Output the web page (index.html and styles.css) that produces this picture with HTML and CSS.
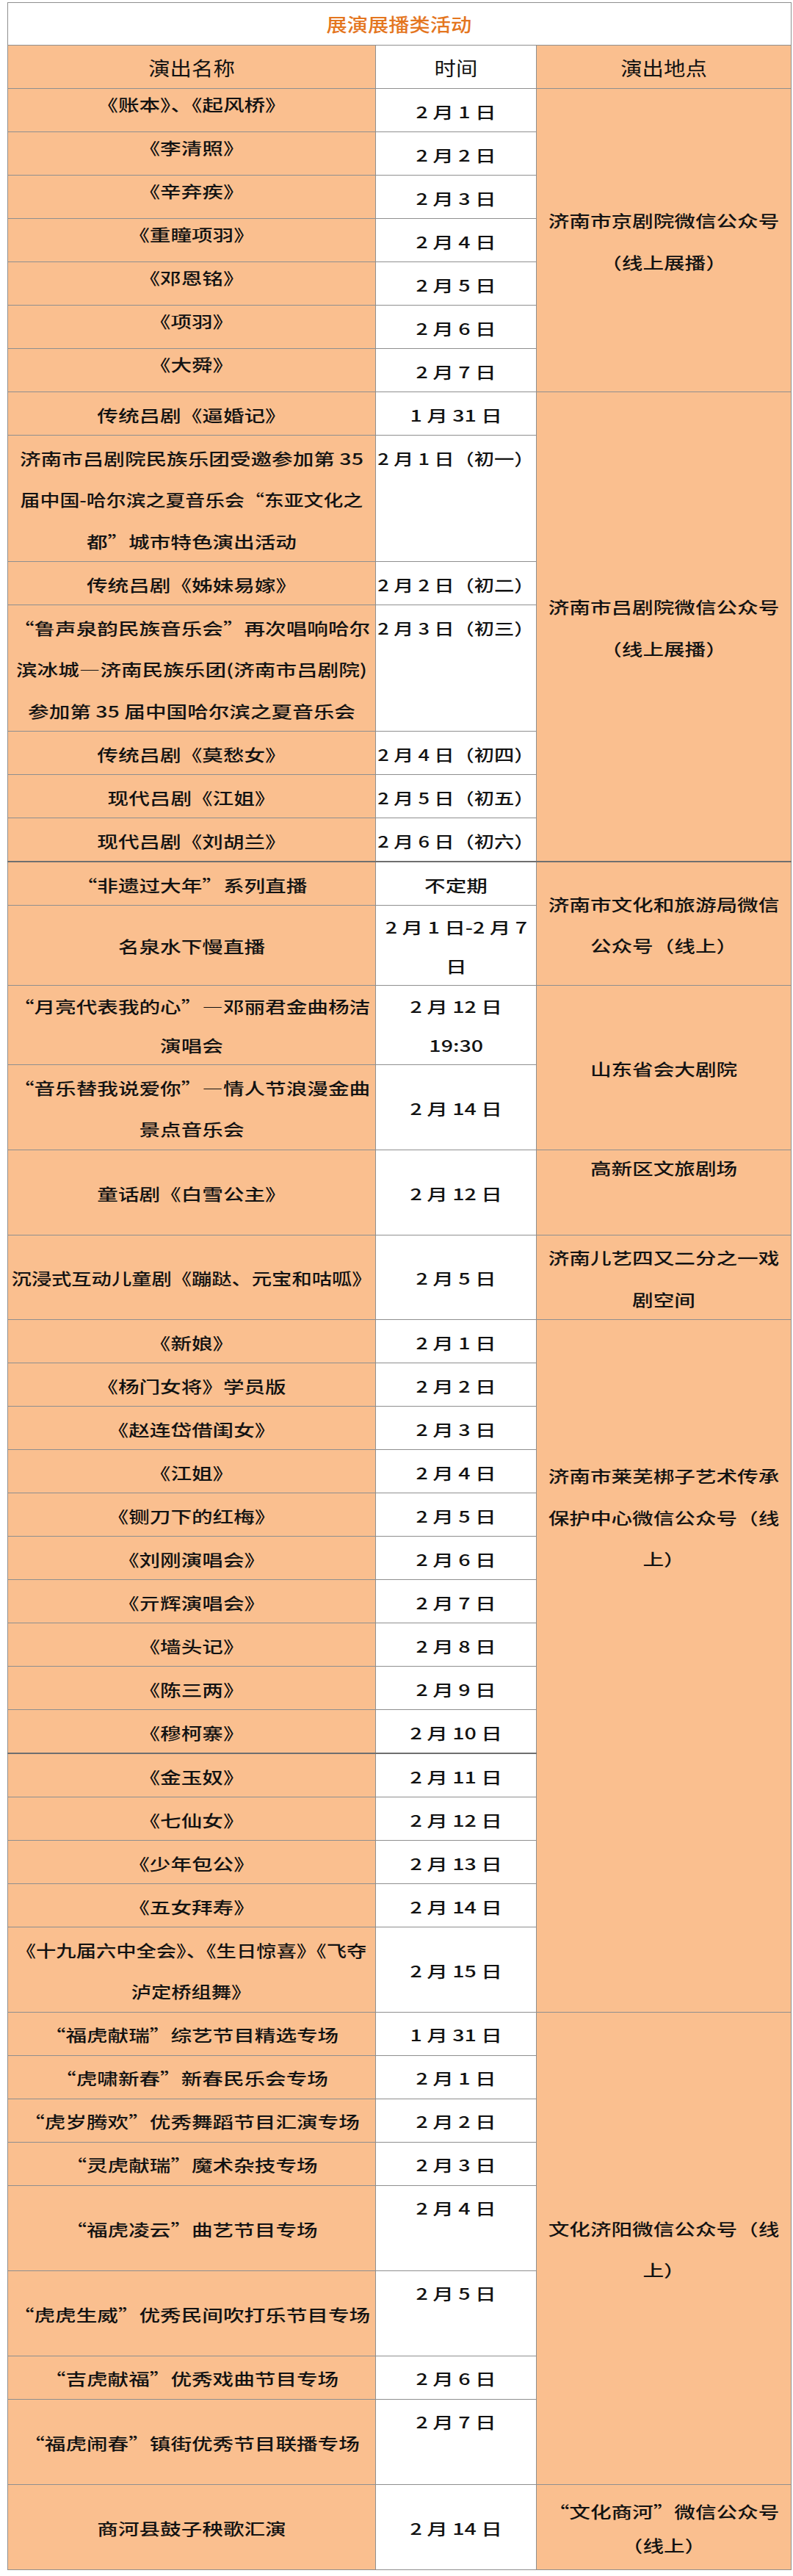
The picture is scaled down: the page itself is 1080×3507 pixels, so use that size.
FILE: index.html
```html
<!DOCTYPE html>
<html lang="zh-CN">
<head>
<meta charset="utf-8">
<title>展演展播类活动</title>
<link rel="stylesheet" href="styles.css">
</head>
<body>
<div class="sheet">
<table class="grid">
<colgroup><col class="w1"><col class="w2"><col class="w3"></colgroup>
<tbody>
<tr class="title"><td colspan="3" class="cap"><span class="tw">展演展播类活动</span></td></tr>
<tr class="head">
<td class="c1"><span class="tw">演出名称</span></td>
<td class="c2"><span class="tw">时间</span></td>
<td class="c3"><span class="tw">演出地点</span></td>
</tr>

<tr><td class="c1 hi"><span class="t">《账本》、《起风桥》</span></td><td class="c2"><span class="t">2 月 1 日</span></td><td class="c3" rowspan="7"><span class="t">济南市京剧院微信公众号<br>（线上展播）</span></td></tr>
<tr><td class="c1 hi"><span class="t">《李清照》</span></td><td class="c2"><span class="t">2 月 2 日</span></td></tr>
<tr><td class="c1 hi"><span class="t">《辛弃疾》</span></td><td class="c2"><span class="t">2 月 3 日</span></td></tr>
<tr><td class="c1 hi"><span class="t">《重瞳项羽》</span></td><td class="c2"><span class="t">2 月 4 日</span></td></tr>
<tr><td class="c1 hi"><span class="t">《邓恩铭》</span></td><td class="c2"><span class="t">2 月 5 日</span></td></tr>
<tr><td class="c1 hi"><span class="t">《项羽》</span></td><td class="c2"><span class="t">2 月 6 日</span></td></tr>
<tr><td class="c1 hi"><span class="t">《大舜》</span></td><td class="c2"><span class="t">2 月 7 日</span></td></tr>

<tr><td class="c1"><span class="t">传统吕剧《逼婚记》</span></td><td class="c2"><span class="t">1 月 31 日</span></td><td class="c3" rowspan="7"><span class="t">济南市吕剧院微信公众号<br>（线上展播）</span></td></tr>
<tr><td class="c1"><span class="t">济南市吕剧院民族乐团受邀参加第 35<br><span class="n">届中国-哈尔滨之夏音乐会“东亚文化之</span><br>都”城市特色演出活动</span></td><td class="c2 top"><span class="t n">2 月 1 日（初一）</span></td></tr>
<tr><td class="c1"><span class="t">传统吕剧《姊妹易嫁》</span></td><td class="c2"><span class="t n">2 月 2 日（初二）</span></td></tr>
<tr><td class="c1"><span class="t">“鲁声泉韵民族音乐会”再次唱响哈尔<br>滨冰城—济南民族乐团(济南市吕剧院)<br>参加第 35 届中国哈尔滨之夏音乐会</span></td><td class="c2 top"><span class="t n">2 月 3 日（初三）</span></td></tr>
<tr><td class="c1"><span class="t">传统吕剧《莫愁女》</span></td><td class="c2"><span class="t n">2 月 4 日（初四）</span></td></tr>
<tr><td class="c1"><span class="t">现代吕剧《江姐》</span></td><td class="c2"><span class="t n">2 月 5 日（初五）</span></td></tr>
<tr><td class="c1"><span class="t">现代吕剧《刘胡兰》</span></td><td class="c2"><span class="t n">2 月 6 日（初六）</span></td></tr>

<tr class="brk"><td class="c1"><span class="t">“非遗过大年”系列直播</span></td><td class="c2"><span class="t">不定期</span></td><td class="c3" rowspan="2"><span class="t">济南市文化和旅游局微信<br>公众号（线上）</span></td></tr>
<tr><td class="c1"><span class="t">名泉水下慢直播</span></td><td class="c2 top tight"><span class="t">2 月 1 日-2 月 7<br>日</span></td></tr>

<tr><td class="c1 tight"><span class="t">“月亮代表我的心”—邓丽君金曲杨洁<br>演唱会</span></td><td class="c2 top tight"><span class="t">2 月 12 日<br>19:30</span></td><td class="c3" rowspan="2"><span class="t">山东省会大剧院</span></td></tr>
<tr><td class="c1"><span class="t">“音乐替我说爱你”—情人节浪漫金曲<br>景点音乐会</span></td><td class="c2"><span class="t">2 月 14 日</span></td></tr>

<tr class="h2"><td class="c1"><span class="t">童话剧《白雪公主》</span></td><td class="c2"><span class="t">2 月 12 日</span></td><td class="c3 top short"><span class="t">高新区文旅剧场</span></td></tr>
<tr><td class="c1"><span class="t n">沉浸式互动儿童剧《蹦跶、元宝和咕呱》</span></td><td class="c2"><span class="t">2 月 5 日</span></td><td class="c3"><span class="t">济南儿艺四又二分之一戏<br>剧空间</span></td></tr>

<tr><td class="c1"><span class="t">《新娘》</span></td><td class="c2"><span class="t">2 月 1 日</span></td><td class="c3 top drop" rowspan="15"><span class="t">济南市莱芜梆子艺术传承<br>保护中心微信公众号（线<br>上）</span></td></tr>
<tr><td class="c1"><span class="t">《杨门女将》学员版</span></td><td class="c2"><span class="t">2 月 2 日</span></td></tr>
<tr><td class="c1"><span class="t">《赵连岱借闺女》</span></td><td class="c2"><span class="t">2 月 3 日</span></td></tr>
<tr><td class="c1"><span class="t">《江姐》</span></td><td class="c2"><span class="t">2 月 4 日</span></td></tr>
<tr><td class="c1"><span class="t">《铡刀下的红梅》</span></td><td class="c2"><span class="t">2 月 5 日</span></td></tr>
<tr><td class="c1"><span class="t">《刘刚演唱会》</span></td><td class="c2"><span class="t">2 月 6 日</span></td></tr>
<tr><td class="c1"><span class="t">《亓辉演唱会》</span></td><td class="c2"><span class="t">2 月 7 日</span></td></tr>
<tr><td class="c1"><span class="t">《墙头记》</span></td><td class="c2"><span class="t">2 月 8 日</span></td></tr>
<tr><td class="c1"><span class="t">《陈三两》</span></td><td class="c2"><span class="t">2 月 9 日</span></td></tr>
<tr><td class="c1"><span class="t">《穆柯寨》</span></td><td class="c2"><span class="t">2 月 10 日</span></td></tr>
<tr class="brk"><td class="c1"><span class="t">《金玉奴》</span></td><td class="c2"><span class="t">2 月 11 日</span></td></tr>
<tr><td class="c1"><span class="t">《七仙女》</span></td><td class="c2"><span class="t">2 月 12 日</span></td></tr>
<tr><td class="c1"><span class="t">《少年包公》</span></td><td class="c2"><span class="t">2 月 13 日</span></td></tr>
<tr><td class="c1"><span class="t">《五女拜寿》</span></td><td class="c2"><span class="t">2 月 14 日</span></td></tr>
<tr><td class="c1"><span class="t n">《十九届六中全会》、《生日惊喜》《飞夺<br>泸定桥组舞》</span></td><td class="c2"><span class="t">2 月 15 日</span></td></tr>

<tr><td class="c1"><span class="t">“福虎献瑞”综艺节目精选专场</span></td><td class="c2"><span class="t">1 月 31 日</span></td><td class="c3" rowspan="8"><span class="t">文化济阳微信公众号（线<br>上）</span></td></tr>
<tr><td class="c1"><span class="t">“虎啸新春”新春民乐会专场</span></td><td class="c2"><span class="t">2 月 1 日</span></td></tr>
<tr><td class="c1"><span class="t">“虎岁腾欢”优秀舞蹈节目汇演专场</span></td><td class="c2"><span class="t">2 月 2 日</span></td></tr>
<tr><td class="c1"><span class="t">“灵虎献瑞”魔术杂技专场</span></td><td class="c2"><span class="t">2 月 3 日</span></td></tr>
<tr class="h2"><td class="c1"><span class="t">“福虎凌云”曲艺节目专场</span></td><td class="c2 top"><span class="t">2 月 4 日</span></td></tr>
<tr class="h2"><td class="c1"><span class="t">“虎虎生威”优秀民间吹打乐节目专场</span></td><td class="c2 top"><span class="t">2 月 5 日</span></td></tr>
<tr><td class="c1"><span class="t">“吉虎献福”优秀戏曲节目专场</span></td><td class="c2"><span class="t">2 月 6 日</span></td></tr>
<tr class="h2"><td class="c1"><span class="t">“福虎闹春”镇街优秀节目联播专场</span></td><td class="c2 top"><span class="t">2 月 7 日</span></td></tr>

<tr class="h2"><td class="c1"><span class="t">商河县鼓子秧歌汇演</span></td><td class="c2"><span class="t">2 月 14 日</span></td><td class="c3 snug"><span class="t">“文化商河”微信公众号<br>（线上）</span></td></tr>
</tbody>
</table>
</div>
</body>
</html>
```

FILE: styles.css
```css
html, body {
  margin: 0;
  padding: 0;
  background: #ffffff;
}

body {
  font-family: "Noto Sans CJK SC", "Noto Sans", sans-serif;
  color: #121212;
}

.sheet {
  padding: 3px 3px 0 10px;
}

.grid {
  border-collapse: collapse;
  table-layout: fixed;
  width: 1067px;
}

.w1 { width: 501px; }
.w2 { width: 219px; }
.w3 { width: 347px; }

.grid td {
  border: 1px solid #8f8f8f;
  padding: 1.5px 0 0;
  text-align: center;
  vertical-align: middle;
  font-size: 22px;
  font-weight: 500;
  line-height: 56.5px;
  white-space: nowrap;
}

.c1, .c3 { background: #fabf8f; }
.c2 { background: #ffffff; }

.t {
  display: inline-block;
  vertical-align: top;
  transform: scaleX(1.3);
}

.n { display: inline-block; }
.t.n { transform: scaleX(1.24); }
.t .n { transform: scaleX(0.94); }

.tw {
  display: inline-block;
  vertical-align: top;
  transform: scaleX(1.13);
}

.grid .cap {
  background: #ffffff;
  color: #e4761f;
  font-size: 25px;
  font-weight: 500;
  line-height: 57px;
  padding: 0;
}

.grid .head td {
  font-size: 26px;
  font-weight: 400;
}

.grid .hi {
  vertical-align: top;
  line-height: 40px;
  padding-top: 0;
}

.grid .top { vertical-align: top; }
.grid .tight { line-height: 53px; }
.grid .short { line-height: 44px; }
.grid .drop { padding-top: 183px; }
.grid .snug { line-height: 46px; }

.h2 { height: 116px; }

.brk td {
  border-top: 2px solid #6f6f6f;
}
```
